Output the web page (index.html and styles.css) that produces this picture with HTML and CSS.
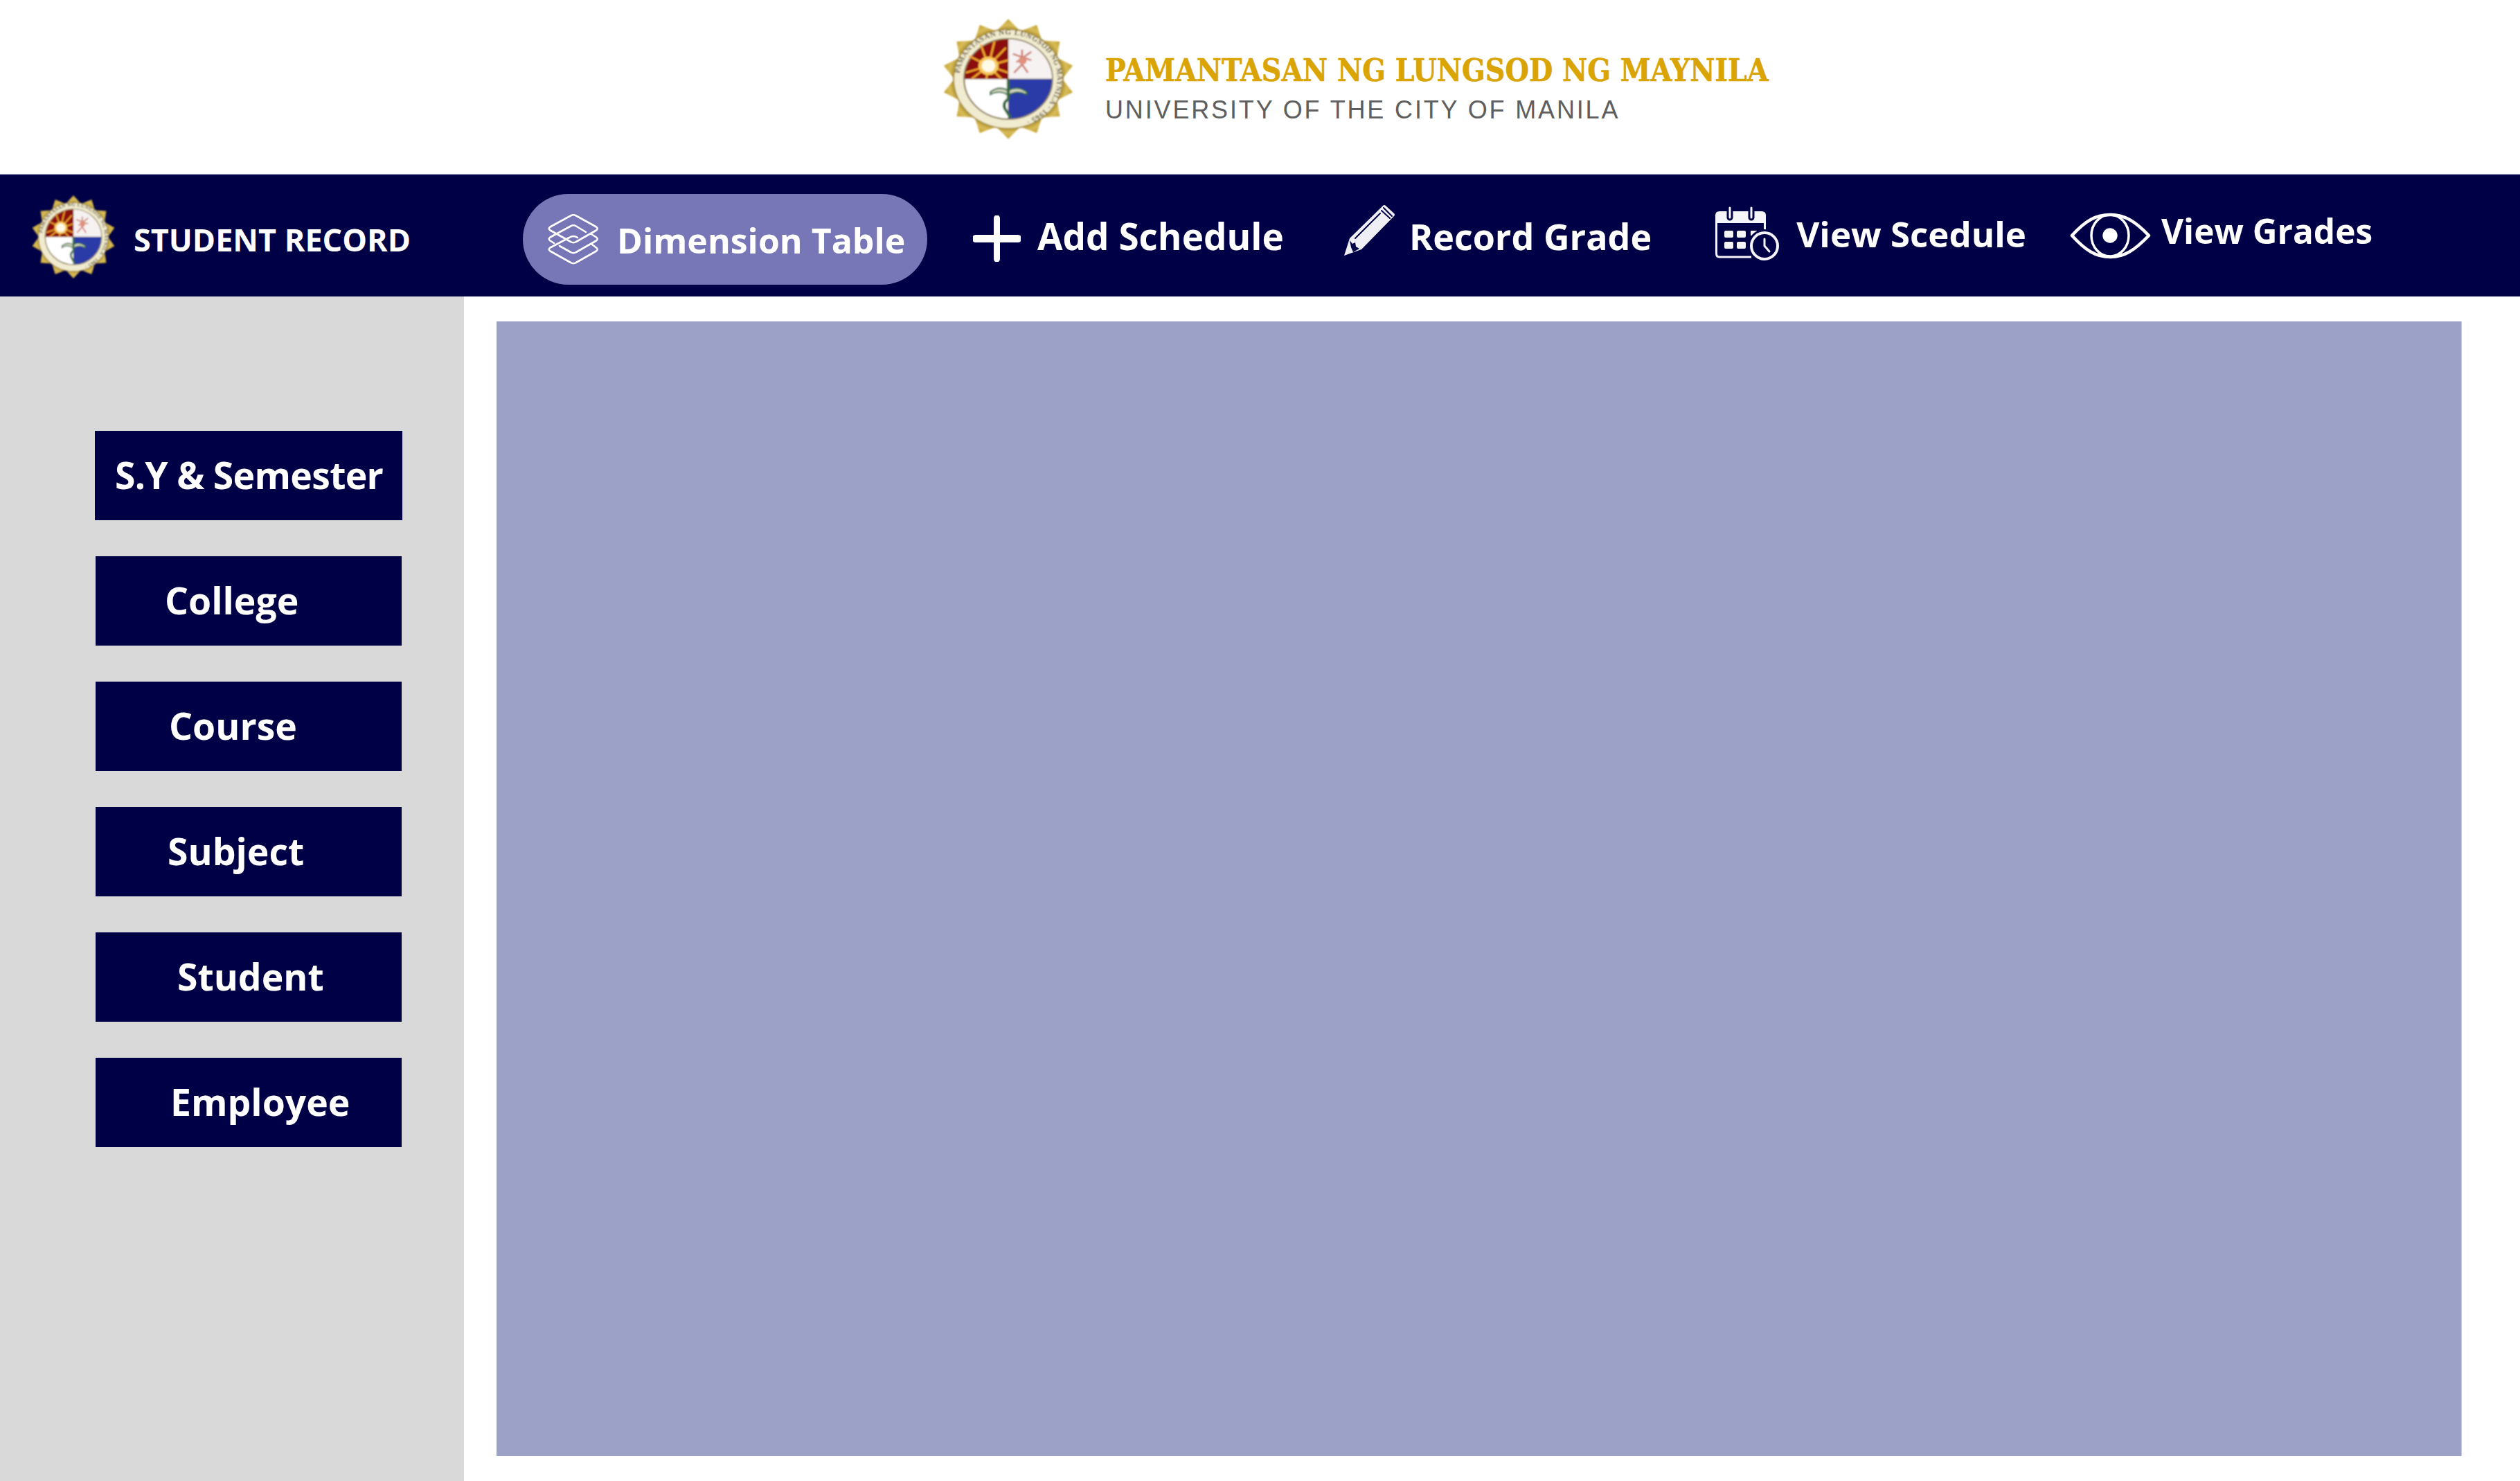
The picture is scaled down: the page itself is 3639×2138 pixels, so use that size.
FILE: index.html
```html
<!DOCTYPE html>
<html lang="en">
<head>
<meta charset="utf-8">
<title>Student Record</title>
<link rel="stylesheet" href="styles.css">
</head>
<body>
<svg class="defs" width="0" height="0" aria-hidden="true">
  <defs>
    <filter id="soft"><feGaussianBlur stdDeviation="4"/></filter>
    <radialGradient id="gold" gradientUnits="userSpaceOnUse" cx="0" cy="0" r="287">
      <stop offset="0.8" stop-color="#a88a22"/>
      <stop offset="0.9" stop-color="#d9bd5a"/>
      <stop offset="1" stop-color="#c29f2c"/>
    </radialGradient>
    <path id="ringpath" d="M-213 0A213 213 0 1 1 213 0A213 213 0 1 1 -213 0"/>
    <symbol id="seal" viewBox="-292 -292 584 584" preserveAspectRatio="none">
      <g filter="url(#soft)">
        <polygon fill="url(#gold)" points="0,-287 52,-229 124,-259 146,-184 224,-179 212,-102 280,-64 235,0 280,64 212,102 224,179 146,184 124,259 52,229 0,287 -52,229 -124,259 -146,184 -224,179 -212,102 -280,64 -235,0 -280,-64 -212,-102 -224,-179 -146,-184 -124,-259 -52,-229"/>
        <circle r="238" fill="#f1ebd0" stroke="#a98f3a" stroke-width="6"/>
        <text class="seal-text"><textPath href="#ringpath" startOffset="2%">PAMANTASAN NG LUNGSOD NG MAYNILA · 1965 ·</textPath></text>
        <circle r="192" fill="#fff" stroke="#8d7f58" stroke-width="7"/>
        <path d="M0 0H-190A190 190 0 0 1 0 -190Z" fill="#8c0f0c"/>
        <path d="M0 -190A190 190 0 0 1 190 0H0Z" fill="#f6f2f2"/>
        <path d="M0 0H190A190 190 0 0 1 0 190Z" fill="#2c3aa8"/>
        <path d="M-86 -63L-60 -180M-86 -63L-10 -150M-86 -63L0 -90M-86 -63L0 -30M-86 -63L-30 0M-86 -63L-95 0M-86 -63L-160 0M-86 -63L-185 -30M-86 -63L-170 -110M-86 -63L-120 -165" stroke="#f2a62a" stroke-width="9"/>
        <circle cx="-86" cy="-63" r="44" fill="#f8c85a"/>
        <circle cx="-86" cy="-63" r="30" fill="#fffbe8"/>
        <path d="M25 -30L60 -70 85 -30M60 -70V-140M20 -120L100 -90M100 -130L35 -80" fill="none" stroke="#c9776a" stroke-width="8"/>
        <circle cx="62" cy="-88" r="18" fill="#e0907c"/>
        <path d="M-78 62Q-40 30 0 55Q40 30 80 62V75Q40 50 0 78Q-40 50 -78 75Z" fill="#cfd3c0" stroke="#2f6a3a" stroke-width="6"/>
        <path d="M0 0V95Q-30 120 -10 150L10 185" fill="none" stroke="#2f6a3a" stroke-width="13"/>
        <path d="M-190 0H190M0 -190V190" stroke="#7d6a4a" stroke-width="2" fill="none"/>
      </g>
    </symbol>
  </defs>
</svg>

<header class="masthead">
  <svg class="seal seal-large" role="img" aria-label="University seal"><use href="#seal"/></svg>
  <div class="masthead-text">
    <h1 class="school-name">PAMANTASAN NG LUNGSOD NG MAYNILA</h1>
    <p class="school-sub">UNIVERSITY OF THE CITY OF MANILA</p>
  </div>
</header>

<nav class="topnav">
  <div class="brand">
    <svg class="seal seal-small" role="img" aria-label="University seal"><use href="#seal"/></svg>
    <span class="brand-text">STUDENT RECORD</span>
  </div>
  <a class="nav-pill">
    <svg class="icon-layers" viewBox="0 0 100 95" fill="none" stroke="#fff" stroke-width="2.600" stroke-linecap="round" stroke-linejoin="round">
      <path d="M44 13.500Q48 11 52 13.500L81 29.500Q84.500 32 81 34.500L52 51Q48 53.500 44 51L14.500 34.500Q11 32 14.500 29.500Z"/>
      <path d="M66 37L52 28.500Q48 26 44 28.500L14.500 44.500Q11 47 14.500 49.500L20 53"/>
      <path d="M28 57L44 66Q48 68.500 52 66L81 49.500Q84.500 47 81 44.500L74 40"/>
      <path d="M54 45Q48 41 42 45L14.500 59.500Q11 62 14.500 64.500L44 81Q48 83.500 52 81L81 64.500Q84.500 62 81 59.500L75 55"/>
    </svg>
    <span class="pill-label">Dimension Table</span>
  </a>
  <a class="nav-item nav-add">
    <svg class="icon-plus" viewBox="0 0 69 67"><path d="M30 4a4.500 4.500 0 0 1 9 0V28H65a4.500 4.500 0 0 1 0 11H39V63a4.500 4.500 0 0 1-9 0V39H4a4.500 4.500 0 0 1 0-11H30Z" fill="#fff"/></svg>
    <span>Add Schedule</span>
  </a>
  <a class="nav-item nav-record">
    <svg class="icon-pencil" viewBox="0 0 100 90">
      <path d="M10 80L18 55 66 8Q68 6 70 8L82 19Q84 21 82 23L35 71Z" fill="#eeeef4"/>
      <path d="M67 11L79 23M64 15L76 26M26 55L62 19" stroke="#000046" stroke-width="2" stroke-linecap="round" fill="none"/>
      <path d="M18 58L22 63 26 61 27 67 32 70 23 75 20 68Z" fill="#000046"/>
    </svg>
    <span>Record Grade</span>
  </a>
  <a class="nav-item nav-view">
    <svg class="icon-calendar" viewBox="0 0 115 95" fill="none">
      <path d="M18 15H79Q85 15 85 21V32H12V21Q12 15 18 15Z" fill="#f4f4fa"/>
      <path d="M13.500 31V76Q13.500 81 18 81H64M83.500 31V46" stroke="#f4f4fa" stroke-width="3"/>
      <path d="M33 9V24M64 9V24" stroke="#000046" stroke-width="9" stroke-linecap="round"/>
      <path d="M33 10V24M64 10V24" stroke="#f4f4fa" stroke-width="3" stroke-linecap="round"/>
      <path d="M27 43h9a2 2 0 0 1 2 2v6a2 2 0 0 1-2 2h-9a2 2 0 0 1-2-2v-6a2 2 0 0 1 2-2zM45 43h9a2 2 0 0 1 2 2v6a2 2 0 0 1-2 2h-9a2 2 0 0 1-2-2v-6a2 2 0 0 1 2-2zM63 43h9v7h-9zM27 59h9a2 2 0 0 1 2 2v6a2 2 0 0 1-2 2h-9a2 2 0 0 1-2-2v-6a2 2 0 0 1 2-2zM45 59h9a2 2 0 0 1 2 2v6a2 2 0 0 1-2 2h-9a2 2 0 0 1-2-2v-6a2 2 0 0 1 2-2z" fill="#f4f4fa"/>
      <circle cx="83" cy="65" r="24" fill="#000046"/>
      <circle cx="83" cy="65" r="19" stroke="#f4f4fa" stroke-width="4"/>
      <path d="M83 55V65L90 73" stroke="#f4f4fa" stroke-width="3" stroke-linecap="round" stroke-linejoin="round"/>
    </svg>
    <span>View Scedule</span>
  </a>
  <a class="nav-item nav-grades">
    <svg class="icon-eye" viewBox="0 0 130 80" fill="none" stroke="#fff">
      <path d="M10 40C30 18 45 10 65 10S100 18 121 40C100 62 85 71 65 71S30 62 10 40Z" stroke-width="4.500" stroke-linejoin="round"/>
      <ellipse cx="65" cy="40" rx="27" ry="30" stroke-width="3.500"/>
      <circle cx="65" cy="40" r="10.700" fill="#fff" stroke="none"/>
    </svg>
    <span>View Grades</span>
  </a>
</nav>

<div class="workspace">
  <aside class="sidebar">
    <a class="side-btn side-first"><span class="label-sy">S.Y &amp; Semester</span></a>
    <a class="side-btn"><span class="label-college">College</span></a>
    <a class="side-btn"><span class="label-course">Course</span></a>
    <a class="side-btn"><span class="label-subject">Subject</span></a>
    <a class="side-btn"><span class="label-student">Student</span></a>
    <a class="side-btn"><span class="label-employee">Employee</span></a>
  </aside>
  <main class="content">
    <div class="panel"></div>
  </main>
</div>
</body>
</html>
```
FILE: styles.css
```css
* { box-sizing: border-box; }
html, body { margin: 0; padding: 0; }
body {
  width: 3639px;
  height: 2138px;
  overflow: hidden;
  background: #fff;
  font-family: "Open Sans", "Noto Sans", sans-serif;
  display: flex;
  flex-direction: column;
}
.defs { display: block; width: 0; height: 0; }
.seal-text { font: 700 34px "Liberation Serif", serif; fill: #5c5030; letter-spacing: 2px; }

.masthead {
  height: 251px;
  flex: none;
  display: flex;
  align-items: flex-start;
  padding: 26px 0 0 1359px;
}
.seal { display: block; flex: none; }
.seal-large { width: 194px; height: 176px; }
.masthead-text { margin: 49px 0 0 43px; }
.school-name {
  margin: 0;
  font-family: "DejaVu Serif", "Liberation Serif", serif;
  font-stretch: condensed;
  font-weight: 700;
  font-size: 44px;
  line-height: 54px;
  color: #d9a404;
  -webkit-text-stroke: 0.5px #d9a404;
  white-space: nowrap;
}
.school-sub {
  margin: 9px 0 0;
  font: 400 36px/42px "Liberation Sans", sans-serif;
  color: #5e5e5e;
  letter-spacing: 2.85px;
  white-space: nowrap;
}

.topnav {
  height: 177px;
  flex: none;
  display: flex;
  align-items: center;
  background: #000046;
  border-top: 1px solid #b9b9d4;
  color: #fff;
  padding-left: 44px;
}
.brand { display: flex; align-items: center; width: 711px; }
.seal-small { width: 124px; height: 122px; margin-top: 4px; }
.brand-text { margin: 11px 0 0 25px; font-size: 45px; font-weight: 700; white-space: nowrap; }
.nav-pill {
  width: 584px;
  height: 131px;
  margin-top: 10px;
  padding-left: 25px;
  border-radius: 66px;
  background: #7777b8;
  display: flex;
  align-items: center;
  gap: 11px;
  font-size: 50px;
  font-weight: 700;
  white-space: nowrap;
}
.pill-label { margin-top: 4px; }
.icon-layers { width: 100px; height: 95px; flex: none; }
.nav-item {
  display: flex;
  align-items: center;
  font-weight: 700;
  white-space: nowrap;
}
.nav-add { margin-left: 66px; gap: 24px; font-size: 53px; }
.icon-plus { width: 69px; height: 67px; flex: none; margin-top: 9px; }
.nav-record { margin-left: 77px; gap: 4px; font-size: 52px; }
.icon-pencil { width: 100px; height: 90px; flex: none; margin-bottom: 12px; }
.nav-view { margin: 0 0 6px 80px; gap: 14px; font-size: 51px; }
.icon-calendar { width: 115px; height: 95px; flex: none; }
.nav-grades { margin-left: 56px; gap: 9px; font-size: 49.5px; }
.nav-grades span { margin-bottom: 14px; }
.icon-eye { width: 130px; height: 80px; flex: none; }

.workspace { flex: 1; display: flex; min-height: 0; }
.sidebar {
  width: 670px;
  flex: none;
  background: #d9d9d9;
  padding: 194px 0 0 138px;
  display: flex;
  flex-direction: column;
  gap: 52px;
}
.side-btn {
  width: 442px;
  height: 129px;
  flex: none;
  background: #000046;
  color: #fff;
  display: flex;
  align-items: center;
  font-size: 53.5px;
  font-weight: 700;
  white-space: nowrap;
  padding-bottom: 3px;
}
.side-first { width: 444px; margin-left: -1px; }
.label-sy { margin-left: 29px; letter-spacing: -0.7px; }
.label-college { margin-left: 100px; }
.label-course { margin-left: 106px; }
.label-subject { margin-left: 104px; }
.label-student { margin-left: 118px; }
.label-employee { margin-left: 108px; }

.content { flex: 1; padding: 36px 84px 36px 47px; }
.panel { height: 100%; background: #9ba1c7; border-right: 1px solid #c6c9e4; }
```
